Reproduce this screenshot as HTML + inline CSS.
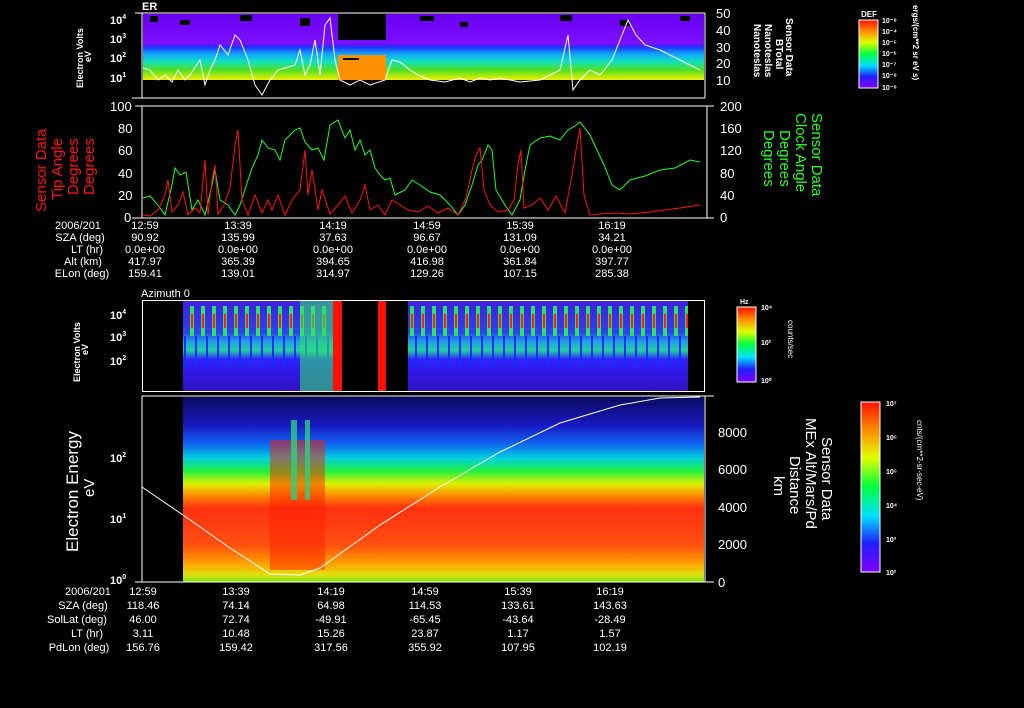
<!DOCTYPE html>
<html><head><style>
html,body{margin:0;padding:0;background:#000;}
svg{display:block;font-family:"Liberation Sans",sans-serif}
</style></head><body>
<svg width="1024" height="708" viewBox="0 0 1024 708" xmlns="http://www.w3.org/2000/svg" fill="#fff" font-size="10" font-weight="bold">
<defs>
<linearGradient id="rb" x1="0" y1="1" x2="0" y2="0">
<stop offset="0" stop-color="#8000ff"/><stop offset="0.17" stop-color="#2020ff"/><stop offset="0.33" stop-color="#00e0ff"/><stop offset="0.5" stop-color="#00ff40"/><stop offset="0.67" stop-color="#e0ff00"/><stop offset="0.83" stop-color="#ff9000"/><stop offset="1" stop-color="#ff1000"/>
</linearGradient>
<linearGradient id="p1" x1="0" y1="0" x2="0" y2="1">
<stop offset="0" stop-color="#6a00f0"/><stop offset="0.45" stop-color="#7a10ff"/><stop offset="0.5" stop-color="#2030ff"/><stop offset="0.6" stop-color="#10a0ff"/><stop offset="0.72" stop-color="#10e0c0"/><stop offset="0.85" stop-color="#50e020"/><stop offset="1" stop-color="#f0f000"/>
</linearGradient>
<linearGradient id="p4" x1="0" y1="0" x2="0" y2="1">
<stop offset="0" stop-color="#0a0a60"/><stop offset="0.15" stop-color="#1818c0"/><stop offset="0.25" stop-color="#1060f0"/><stop offset="0.33" stop-color="#00d0e0"/><stop offset="0.4" stop-color="#20f040"/><stop offset="0.47" stop-color="#e0f000"/><stop offset="0.53" stop-color="#ff9000"/><stop offset="0.6" stop-color="#ff3010"/><stop offset="0.8" stop-color="#ff5010"/><stop offset="0.9" stop-color="#ffa000"/><stop offset="0.96" stop-color="#e0e010"/><stop offset="1" stop-color="#80e010"/>
</linearGradient>
<linearGradient id="p3" x1="0" y1="0" x2="0" y2="1">
<stop offset="0" stop-color="#4020e0"/><stop offset="0.35" stop-color="#3040f0"/><stop offset="0.45" stop-color="#20a0e0"/><stop offset="0.55" stop-color="#20d0a0"/><stop offset="0.65" stop-color="#3020ff"/><stop offset="1" stop-color="#3010c0"/>
</linearGradient>
<pattern id="stripe" width="11" height="92" patternUnits="userSpaceOnUse">
<rect x="3" y="30" width="4" height="30" fill="#30e060"/><rect x="4" y="38" width="2" height="14" fill="#ff2000"/><rect x="8" y="60" width="2" height="32" fill="#1030ff"/>
</pattern>
</defs>

<!-- Panel 1 -->
<text x="142" y="10" font-size="11">ER</text>
<rect x="143" y="14" width="561" height="66" fill="url(#p1)"/>
<rect x="338" y="55" width="48" height="25" fill="#ff9000"/>
<rect x="343" y="58" width="16" height="2" fill="#000"/>
<rect x="338" y="14" width="48" height="26" fill="#000"/>
<g fill="#000"><rect x="150" y="16" width="8" height="6"/><rect x="180" y="20" width="10" height="5"/><rect x="240" y="15" width="12" height="6"/><rect x="300" y="18" width="10" height="8"/><rect x="420" y="16" width="14" height="5"/><rect x="460" y="22" width="8" height="5"/><rect x="560" y="15" width="12" height="6"/><rect x="620" y="20" width="10" height="6"/><rect x="680" y="16" width="10" height="5"/></g>
<polyline fill="none" stroke="#fff" stroke-width="1" points="143,68 150,70 158,80 165,75 172,82 178,70 185,80 190,75 200,60 205,85 210,70 215,60 220,45 228,55 235,35 240,40 248,60 255,85 262,95 270,80 278,70 285,68 295,65 300,50 305,75 310,65 315,40 320,75 325,25 330,18 335,60 340,80 350,85 360,80 370,85 385,80 392,60 400,62 410,70 418,75 430,80 445,82 460,78 470,82 480,78 490,80 500,78 510,80 520,82 540,80 560,70 568,35 573,90 580,80 590,70 600,75 612,60 620,40 628,20 636,35 645,45 660,50 680,60 700,70"/>
<g stroke="#fff" fill="none" stroke-width="1">
<line x1="135" y1="13" x2="705" y2="13"/><line x1="142" y1="13" x2="142" y2="98"/><line x1="132" y1="98" x2="705" y2="98"/><line x1="705" y1="13" x2="705" y2="98"/>
</g>
<text x="110" y="24" font-size="11">10<tspan dy="-5" font-size="7">4</tspan></text>
<text x="110" y="43" font-size="11">10<tspan dy="-5" font-size="7">3</tspan></text>
<text x="110" y="62" font-size="11">10<tspan dy="-5" font-size="7">2</tspan></text>
<text x="110" y="82" font-size="11">10<tspan dy="-5" font-size="7">1</tspan></text>
<text transform="translate(83,88) rotate(-90)" font-size="9">Electron Volts</text>
<text transform="translate(91,62) rotate(-90)" font-size="9">eV</text>
<g font-size="13" font-weight="normal"><text x="716" y="18">50</text><text x="716" y="35">40</text><text x="716" y="52">30</text><text x="716" y="68">20</text><text x="716" y="85">10</text></g>
<text transform="translate(754,24) rotate(90)" font-size="10">Nanoteslas</text>
<text transform="translate(765,24) rotate(90)" font-size="10">Nanoteslas</text>
<text transform="translate(776,39) rotate(90)" font-size="10">BTotal</text>
<text transform="translate(786,18) rotate(90)" font-size="10">Sensor Data</text>
<rect x="859" y="20" width="19" height="68" fill="url(#rb)" stroke="#fff"/>
<text x="861" y="17" font-size="8">DEF</text>
<g font-size="7"><text x="882" y="23">10⁻⁸</text><text x="882" y="34">10⁻⁴</text><text x="882" y="45">10⁻⁵</text><text x="882" y="56">10⁻⁶</text><text x="882" y="67">10⁻⁷</text><text x="882" y="78">10⁻⁸</text><text x="882" y="90">10⁻⁹</text></g>
<text transform="translate(913,5) rotate(90)" font-size="8">ergs/(cm**2 sr eV s)</text>

<!-- Panel 2 -->
<g stroke="#fff" fill="none"><line x1="135" y1="106" x2="714" y2="106"/><line x1="142" y1="106" x2="142" y2="218"/><line x1="132" y1="218" x2="714" y2="218"/><line x1="707" y1="106" x2="707" y2="218"/></g>
<polyline fill="none" stroke="#20ff20" stroke-width="1" points="143,198 150,196 158,205 165,215 172,185 175,168 180,175 186,172 192,210 198,200 205,215 212,185 215,170 220,200 228,205 235,215 240,205 248,180 252,168 258,155 262,140 268,148 275,150 280,160 285,140 290,135 295,130 300,128 305,142 312,150 318,148 324,160 330,125 338,120 345,138 350,130 355,150 360,140 365,155 370,150 375,168 380,175 385,180 390,178 395,195 405,190 412,180 420,185 430,192 440,195 450,205 458,215 465,205 472,185 478,165 482,160 488,145 492,150 496,190 505,205 512,215 520,200 525,170 530,145 540,138 550,136 560,140 568,130 575,126 580,122 590,135 597,150 604,165 612,185 620,190 630,180 645,176 660,170 675,168 690,160 700,162"/>
<polyline fill="none" stroke="#ff1010" stroke-width="1" points="143,215 150,216 158,210 165,195 168,180 172,212 178,205 183,192 188,215 195,208 200,213 205,160 208,215 212,180 215,165 218,214 224,205 230,188 235,145 238,130 242,200 248,215 255,195 262,213 268,200 272,210 278,195 285,215 292,200 300,190 305,150 308,195 312,170 318,210 322,190 330,214 338,205 345,196 352,213 360,200 365,185 370,210 378,205 385,215 392,200 400,205 408,210 418,212 428,206 438,213 448,208 458,215 466,198 472,170 476,155 480,148 484,190 490,205 498,212 508,210 514,200 518,165 521,150 524,208 532,205 540,198 548,210 556,196 565,213 572,175 576,150 580,128 584,195 590,215 600,214 615,213 630,214 650,212 665,210 680,208 700,205"/>
<g font-size="13" font-weight="normal"><text x="110" y="111">100</text><text x="118" y="133">80</text><text x="118" y="155">60</text><text x="118" y="178">40</text><text x="118" y="200">20</text><text x="124" y="222">0</text>
<text x="720" y="111">200</text><text x="720" y="133">160</text><text x="720" y="155">120</text><text x="720" y="178">80</text><text x="720" y="200">40</text><text x="720" y="222">0</text></g>
<g fill="#ff1010" font-size="15" font-weight="normal">
<text transform="translate(46,212) rotate(-90)">Sensor Data</text>
<text transform="translate(62,200) rotate(-90)">Tip Angle</text>
<text transform="translate(78,195) rotate(-90)">Degrees</text>
<text transform="translate(94,195) rotate(-90)">Degrees</text></g>
<g fill="#20ff20" font-size="15" font-weight="normal">
<text transform="translate(812,113) rotate(90)">Sensor Data</text>
<text transform="translate(796,113) rotate(90)">Clock Angle</text>
<text transform="translate(780,130) rotate(90)">Degrees</text>
<text transform="translate(764,130) rotate(90)">Degrees</text></g>
<g font-size="11" text-anchor="middle" font-weight="normal">
<text x="78" y="229">2006/201</text><text x="80" y="241">SZA (deg)</text><text x="87" y="253">LT (hr)</text><text x="83" y="265">Alt (km)</text><text x="82" y="277">ELon (deg)</text>
<text x="145" y="229">12:59</text><text x="238" y="229">13:39</text><text x="333" y="229">14:19</text><text x="427" y="229">14:59</text><text x="520" y="229">15:39</text><text x="612" y="229">16:19</text>
<text x="145" y="241">90.92</text><text x="238" y="241">135.99</text><text x="333" y="241">37.63</text><text x="427" y="241">96.67</text><text x="520" y="241">131.09</text><text x="612" y="241">34.21</text>
<text x="145" y="253">0.0e+00</text><text x="238" y="253">0.0e+00</text><text x="333" y="253">0.0e+00</text><text x="427" y="253">0.0e+00</text><text x="520" y="253">0.0e+00</text><text x="612" y="253">0.0e+00</text>
<text x="145" y="265">417.97</text><text x="238" y="265">365.39</text><text x="333" y="265">394.65</text><text x="427" y="265">416.98</text><text x="520" y="265">361.84</text><text x="612" y="265">397.77</text>
<text x="145" y="277">159.41</text><text x="238" y="277">139.01</text><text x="333" y="277">314.97</text><text x="427" y="277">129.26</text><text x="520" y="277">107.15</text><text x="612" y="277">285.38</text>
</g>

<!-- Panel 3 -->
<text x="141" y="297" font-weight="normal" font-size="11">Azimuth 0</text>
<rect x="183" y="301" width="157" height="90" fill="url(#p3)"/>
<rect x="183" y="301" width="157" height="90" fill="url(#stripe)"/>
<rect x="300" y="301" width="33" height="90" fill="#30e070" opacity="0.6"/>
<rect x="333" y="301" width="9" height="90" fill="#ff1000"/>
<rect x="378" y="301" width="8" height="90" fill="#ff1000"/>
<rect x="408" y="301" width="280" height="90" fill="url(#p3)"/>
<rect x="408" y="301" width="280" height="90" fill="url(#stripe)"/>
<g stroke="#fff" fill="none"><rect x="142.5" y="300.5" width="562" height="91"/></g>
<text x="110" y="319" font-size="11">10<tspan dy="-5" font-size="7">4</tspan></text>
<text x="110" y="341" font-size="11">10<tspan dy="-5" font-size="7">3</tspan></text>
<text x="110" y="365" font-size="11">10<tspan dy="-5" font-size="7">2</tspan></text>
<text transform="translate(80,382) rotate(-90)" font-size="9">Electron Volts</text>
<text transform="translate(88,355) rotate(-90)" font-size="9">eV</text>
<rect x="737" y="307" width="19" height="75" fill="url(#rb)" stroke="#fff"/>
<text x="740" y="304" font-size="7">Hz</text>
<g font-size="7"><text x="761" y="310">10⁴</text><text x="761" y="345">10²</text><text x="761" y="383">10⁰</text></g>
<text transform="translate(788,320) rotate(90)" font-size="8" font-weight="normal">counts/sec</text>

<!-- Panel 4 -->
<rect x="183" y="397" width="521" height="185" fill="url(#p4)"/>
<rect x="270" y="440" width="55" height="130" fill="#ff2000" opacity="0.5"/>
<rect x="291" y="420" width="6" height="80" fill="#30d080" opacity="0.8"/><rect x="305" y="420" width="5" height="80" fill="#30d080" opacity="0.8"/>
<g stroke="#fff" fill="none"><line x1="142" y1="396" x2="714" y2="396"/><line x1="142" y1="396" x2="142" y2="582"/><line x1="135" y1="582" x2="714" y2="582"/><line x1="705" y1="396" x2="705" y2="582"/></g>
<polyline fill="none" stroke="#fff" stroke-width="1" points="142,487 183,515 230,548 270,574 300,575 320,568 380,525 440,487 500,452 560,423 620,405 660,398 700,397"/>
<text x="110" y="462" font-size="11">10<tspan dy="-5" font-size="7">2</tspan></text>
<text x="110" y="523" font-size="11">10<tspan dy="-5" font-size="7">1</tspan></text>
<text x="110" y="584" font-size="11">10<tspan dy="-5" font-size="7">0</tspan></text>
<text transform="translate(78,552) rotate(-90)" font-weight="normal" font-size="17">Electron Energy</text>
<text transform="translate(94,497) rotate(-90)" font-weight="normal" font-size="15">eV</text>
<g font-size="13" font-weight="normal"><text x="718" y="437">8000</text><text x="718" y="474">6000</text><text x="718" y="512">4000</text><text x="718" y="549">2000</text><text x="718" y="587">0</text></g>
<g font-size="15" font-weight="normal">
<text transform="translate(822,437) rotate(90)">Sensor Data</text>
<text transform="translate(806,418) rotate(90)">MEx Alt/Mars/Pd</text>
<text transform="translate(790,456) rotate(90)">Distance</text>
<text transform="translate(774,476) rotate(90)">km</text></g>
<rect x="861" y="402" width="19" height="170" fill="url(#rb)" stroke="#fff"/>
<g font-size="7"><text x="886" y="406">10⁷</text><text x="886" y="440">10⁶</text><text x="886" y="474">10⁵</text><text x="886" y="508">10⁴</text><text x="886" y="542">10³</text><text x="886" y="575">10²</text></g>
<text transform="translate(917,420) rotate(90)" font-size="8" font-weight="normal">cnts/(cm**2-sr-sec-eV)</text>
<g font-size="11" text-anchor="middle" font-weight="normal">
<text x="88" y="595">2006/201</text><text x="83" y="609">SZA (deg)</text><text x="77" y="623">SolLat (deg)</text><text x="87" y="637">LT (hr)</text><text x="79" y="651">PdLon (deg)</text>
<text x="143" y="595">12:59</text><text x="236" y="595">13:39</text><text x="331" y="595">14:19</text><text x="425" y="595">14:59</text><text x="518" y="595">15:39</text><text x="610" y="595">16:19</text>
<text x="143" y="609">118.46</text><text x="236" y="609">74.14</text><text x="331" y="609">64.98</text><text x="425" y="609">114.53</text><text x="518" y="609">133.61</text><text x="610" y="609">143.63</text>
<text x="143" y="623">46.00</text><text x="236" y="623">72.74</text><text x="331" y="623">-49.91</text><text x="425" y="623">-65.45</text><text x="518" y="623">-43.64</text><text x="610" y="623">-28.49</text>
<text x="143" y="637">3.11</text><text x="236" y="637">10.48</text><text x="331" y="637">15.26</text><text x="425" y="637">23.87</text><text x="518" y="637">1.17</text><text x="610" y="637">1.57</text>
<text x="143" y="651">156.76</text><text x="236" y="651">159.42</text><text x="331" y="651">317.56</text><text x="425" y="651">355.92</text><text x="518" y="651">107.95</text><text x="610" y="651">102.19</text>
</g>
</svg>
</body></html>
